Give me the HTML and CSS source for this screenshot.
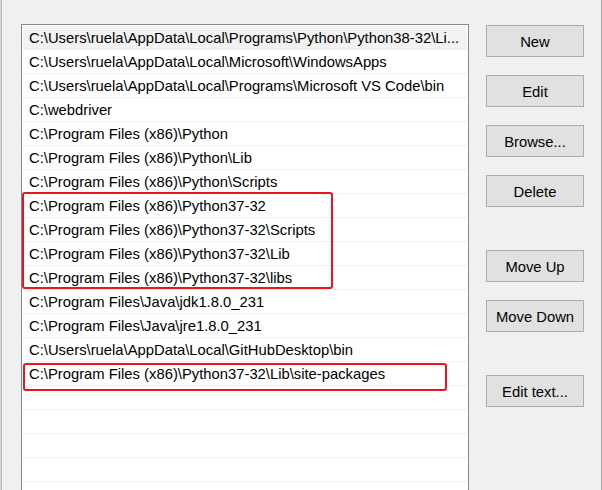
FILE: index.html
```html
<!DOCTYPE html>
<html>
<head>
<meta charset="utf-8">
<link rel="stylesheet" href="styles.css">
</head>
<body>
<div class="screen">
  <div class="behind"></div>
  <div class="dialog">
    <div class="list">
      <div class="row sel">C:\Users\ruela\AppData\Local\Programs\Python\Python38-32\Li...</div>
      <div class="row">C:\Users\ruela\AppData\Local\Microsoft\WindowsApps</div>
      <div class="row">C:\Users\ruela\AppData\Local\Programs\Microsoft VS Code\bin</div>
      <div class="row">C:\webdriver</div>
      <div class="row">C:\Program Files (x86)\Python</div>
      <div class="row">C:\Program Files (x86)\Python\Lib</div>
      <div class="row">C:\Program Files (x86)\Python\Scripts</div>
      <div class="row">C:\Program Files (x86)\Python37-32</div>
      <div class="row">C:\Program Files (x86)\Python37-32\Scripts</div>
      <div class="row">C:\Program Files (x86)\Python37-32\Lib</div>
      <div class="row">C:\Program Files (x86)\Python37-32\libs</div>
      <div class="row">C:\Program Files\Java\jdk1.8.0_231</div>
      <div class="row">C:\Program Files\Java\jre1.8.0_231</div>
      <div class="row">C:\Users\ruela\AppData\Local\GitHubDesktop\bin</div>
      <div class="row">C:\Program Files (x86)\Python37-32\Lib\site-packages</div>
      <div class="row"></div>
      <div class="row"></div>
      <div class="row"></div>
      <div class="row"></div>
      <div class="row"></div>
      <div class="mark mark-a"></div>
      <div class="mark mark-b"></div>
    </div>
    <div class="buttons">
      <button class="btn">New</button>
      <button class="btn">Edit</button>
      <button class="btn">Browse...</button>
      <button class="btn">Delete</button>
      <button class="btn group">Move Up</button>
      <button class="btn">Move Down</button>
      <button class="btn group">Edit text...</button>
    </div>
  </div>
  <div class="edge"></div>
</div>
</body>
</html>
```
FILE: styles.css
```css
* { box-sizing: border-box; }
html, body {
  margin: 0;
  padding: 0;
  background: #f0f0f0;
}
.screen {
  display: flex;
  width: 602px;
  height: 490px;
  overflow: hidden;
  font-family: "Liberation Sans", Arial, sans-serif;
  font-size: 14.8px;
  color: #000;
}
.behind {
  width: 2px;
  flex: none;
  background: linear-gradient(to right, #d4d4d4 0 1px, #bcbcbc 1px 2px);
}
.dialog {
  flex: 1;
  display: flex;
  padding: 24px 0 0 19px;
  gap: 17px;
}
.list {
  position: relative;
  width: 448px;
  height: 480px;
  flex: none;
  background: #fff;
  border: 1px solid #82878f;
  padding: 1px;
}
.row {
  height: 24px;
  line-height: 21px;
  padding: 2px 2px 0 6px;
  border-bottom: 1px solid #efefef;
  white-space: nowrap;
  overflow: hidden;
}
.row.sel {
  background: #f2f2f2;
}
.mark {
  position: absolute;
  border: 2px solid #e8141e;
  border-radius: 3px;
}
.mark-a {
  left: 0;
  top: 167px;
  width: 311px;
  height: 97px;
}
.mark-b {
  left: 1px;
  top: 338px;
  width: 424px;
  height: 28px;
}
.buttons {
  display: flex;
  flex-direction: column;
  gap: 18px;
  padding-top: 1px;
  width: 98px;
  flex: none;
}
.btn {
  width: 98px;
  height: 32px;
  background: #e1e1e1;
  border: 1px solid #adadad;
  border-radius: 0;
  font: inherit;
  color: #000;
  padding: 2px 0 0;
}
.btn.group {
  margin-top: 25px;
}
.edge {
  width: 1px;
  flex: none;
  background: #a8a8a8;
}
```
